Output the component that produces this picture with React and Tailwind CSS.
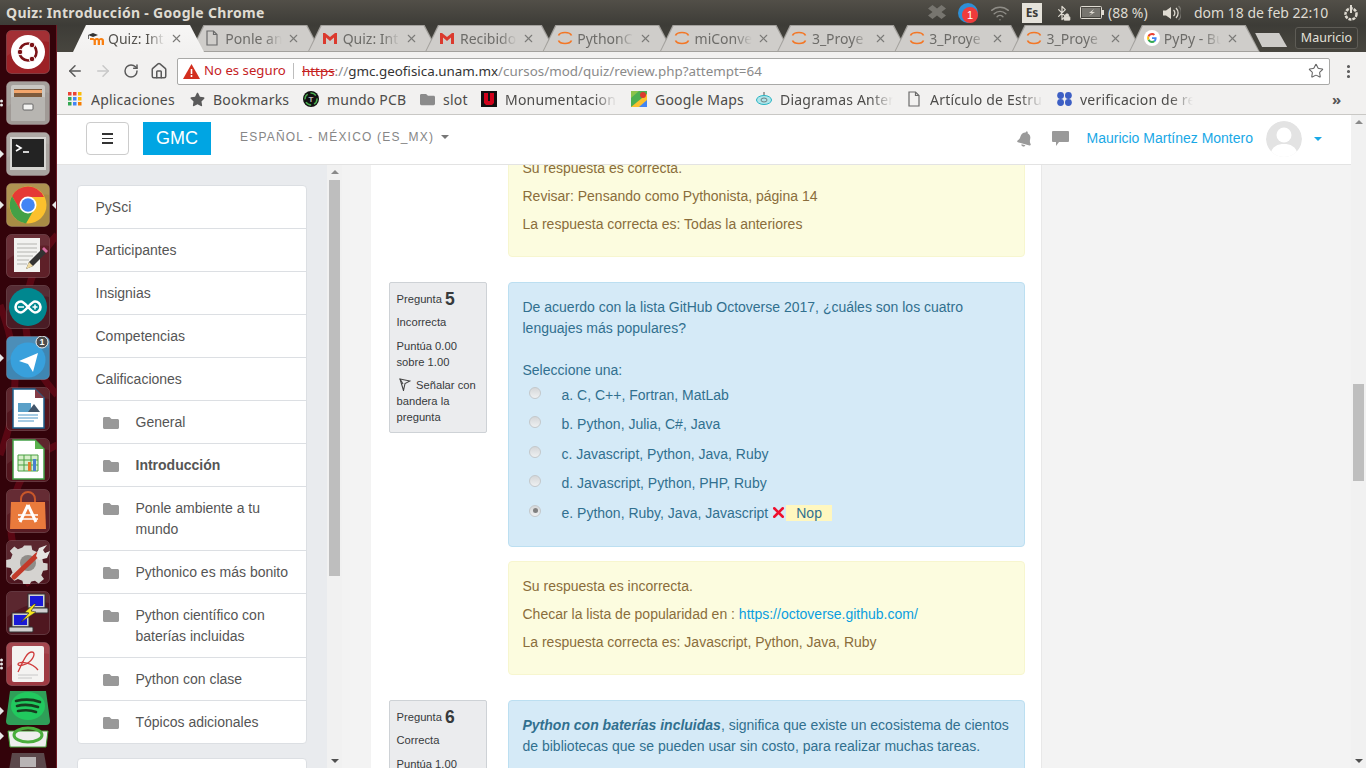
import { ArrowLeft, ArrowRight, RotateCw, Home, Star, MoreVertical, X, Wifi, Bluetooth, Lock } from 'lucide-react'
import { FaBell, FaFolder, FaStar } from 'react-icons/fa'

const tabs = [
  { label: 'Quiz: Int', icon: 'moodle', active: true },
  { label: 'Ponle an', icon: 'doc' },
  { label: 'Quiz: Int', icon: 'gmail' },
  { label: 'Recibido', icon: 'gmail' },
  { label: 'PythonC', icon: 'jupyter' },
  { label: 'miConve', icon: 'jupyter' },
  { label: '3_Proye', icon: 'jupyter' },
  { label: '3_Proye', icon: 'jupyter' },
  { label: '3_Proye', icon: 'jupyter' },
  { label: 'PyPy - Bu', icon: 'google' },
]

const sideItems = [
  { label: 'PySci' },
  { label: 'Participantes' },
  { label: 'Insignias' },
  { label: 'Competencias' },
  { label: 'Calificaciones' },
  { label: 'General', folder: true },
  { label: 'Introducción', folder: true, bold: true },
  { label: 'Ponle ambiente a tu mundo', folder: true },
  { label: 'Pythonico es más bonito', folder: true },
  { label: 'Python científico con baterías incluidas', folder: true },
  { label: 'Python con clase', folder: true },
  { label: 'Tópicos adicionales', folder: true },
]

const options = [
  'a. C, C++, Fortran, MatLab',
  'b. Python, Julia, C#, Java',
  'c. Javascript, Python, Java, Ruby',
  'd. Javascript, Python, PHP, Ruby',
]

function DocIcon({ className = '' }) {
  return (
    <svg width="14" height="16" viewBox="0 0 14 16" className={className} fill="none" stroke="#6b6b6b" strokeWidth="1.2">
      <path d="M2 1h6.5L12 4.5V15H2z" />
      <path d="M8.5 1v3.5H12" />
    </svg>
  )
}

function Favicon({ type }) {
  if (type === 'doc') return <DocIcon className="-ml-[2px]" />
  if (type === 'gmail') return (
    <svg width="16" height="13" viewBox="0 0 16 13" className="-ml-[2px]">
      <path d="M1 1h2l5 4 5-4h2v11h-3V5.5L8 9 4 5.5V12H1z" fill="#db3a2e" />
    </svg>
  )
  if (type === 'jupyter') return (
    <svg width="16" height="16" viewBox="0 0 16 16" className="-ml-[1px]" fill="none" stroke="#f37726" strokeWidth="1.7">
      <path d="M1.5 5.5C3 1.5 13 1.5 14.5 5.5" />
      <path d="M1.5 10.5C3 14.5 13 14.5 14.5 10.5" />
    </svg>
  )
  if (type === 'google') return (
    <svg width="16" height="16" viewBox="0 0 16 16">
      <circle cx="8" cy="8" r="8" fill="#fff" />
      <path d="M12.6 8.2c0-.4 0-.7-.1-1H8v1.9h2.6c-.1.6-.5 1.1-1 1.500l1.500 1.200c.9-.8 1.500-2.100 1.500-3.600z" fill="#4285f4" />
      <path d="M8 13c1.300 0 2.300-.4 3.100-1.200l-1.500-1.200c-.4.3-1 .5-1.600.5-1.200 0-2.300-.8-2.700-2L3.700 10.300C4.500 11.900 6.100 13 8 13z" fill="#34a853" />
      <path d="M5.300 9.100c-.2-.7-.2-1.500 0-2.200L3.700 5.700c-.7 1.400-.7 3.200 0 4.600z" fill="#fbbc05" />
      <path d="M8 4.900c.7 0 1.300.2 1.800.7l1.300-1.300C10.300 3.500 9.200 3 8 3 6.100 3 4.500 4.100 3.700 5.700l1.600 1.200C5.700 5.700 6.800 4.900 8 4.900z" fill="#ea4335" />
    </svg>
  )
  return (
    <svg width="18" height="14" viewBox="0 0 18 14" className="-ml-[1px]">
      <path d="M3 8V6h2.500c1 0 1.500.5 2 1 .6-.7 1.300-1 2.300-1 1.200 0 1.700.4 2.200 1 .5-.6 1.200-1 2.200-1 1.800 0 2.800 1 2.800 2.700V13h-2.300V9c0-.8-.3-1.100-.9-1.100S13 8.200 13 9v4h-2.300V9c0-.8-.3-1.100-.9-1.100s-.9.300-.9 1.100v4H6.600V9c0-.6-.2-1-.8-1z" fill="#f98012" />
      <path d="M1 3l5-2 5 2-5 2z" fill="#333" />
      <path d="M1.500 3v4" stroke="#333" strokeWidth=".7" />
    </svg>
  )
}

function Tab({ label, icon, active }) {
  return (
    <div className={`shrink-0 w-[131px] h-[27px] -mr-[13.7px] [clip-path:polygon(0_100%,13px_0,117px_0,131px_100%)] ${active ? 'relative z-10 bg-[#f4f3f2]' : 'bg-[#a3a19d] pb-px'}`}>
      <div className={`h-full flex items-center pl-[14px] [clip-path:polygon(1.5px_100%,14px_1px,116px_1px,129.500px_100%)] ${active ? 'bg-linear-to-b from-[#f7f6f5] to-[#f2f1f0]' : 'bg-[#cfcdca]'}`}>
        <span className="w-[18px] flex justify-center shrink-0"><Favicon type={icon} /></span>
        <span className={`ml-[3px] w-[57px] shrink-0 overflow-hidden whitespace-nowrap text-[14px] [mask-image:linear-gradient(to_right,black_70%,transparent)] ${active ? 'text-[#55534f]' : 'text-[#6d6c69]'}`}>{label}</span>
        <X size={13} strokeWidth={2} className="ml-[5px] text-[#7b7a78]" />
      </div>
    </div>
  )
}

function Tile({ children, fill = '#5c1a22' }) {
  return (
    <svg width="44" height="44" viewBox="0 0 44 44" className="block shrink-0">
      <rect x=".5" y=".5" width="43" height="43" rx="5" fill={fill} stroke="#ffffff" strokeOpacity=".18" />
      <path d="M1 6a5 5 0 0 1 5-5h32a5 5 0 0 1 5 5v6C30 10 14 16 1 26z" fill="#fff" opacity=".07" />
      {children}
    </svg>
  )
}

function Pip() {
  return <span className="w-0 h-0 border-y-[4px] border-y-transparent border-l-[4px] border-l-[#e8e8e8]" />
}

function Dot() {
  return <span className="w-[3px] h-[3px] rounded-full bg-[#e8e8e8]" />
}

const launcherIcons = [
  {
    icon: (
      <Tile fill="#9c2126" key="ubuntu">
        <circle cx="22" cy="22" r="17" fill="#fff" />
        <circle cx="22" cy="22" r="8.500" fill="none" stroke="#7b1216" strokeWidth="2.600" />
        <circle cx="14" cy="22" r="2.800" fill="#7b1216" stroke="#fff" />
        <circle cx="26" cy="15" r="2.800" fill="#7b1216" stroke="#fff" />
        <circle cx="26" cy="29" r="2.800" fill="#7b1216" stroke="#fff" />
      </Tile>
    ),
  },
  {
    dots: 2,
    icon: (
      <Tile fill="#a09a96">
        <rect x="5" y="4" width="34" height="36" rx="2" fill="#c9c7c3" />
        <rect x="8" y="8" width="28" height="8" fill="#7d5a3c" />
        <rect x="8" y="9" width="28" height="3" fill="#f2a56b" />
        <rect x="5" y="16" width="34" height="24" rx="1" fill="#b7b5b1" />
        <rect x="17" y="23" width="10" height="6" rx="1" fill="#f3f3f1" stroke="#666" />
      </Tile>
    ),
  },
  {
    pip: true,
    icon: (
      <Tile fill="#a8a39f">
        <rect x="4" y="5" width="36" height="33" fill="#d6d5d2" />
        <rect x="6" y="7" width="32" height="28" fill="#232323" />
        <path d="M10 13l5 3-5 3" fill="none" stroke="#fff" strokeWidth="1.600" />
        <path d="M17 20h6" stroke="#fff" strokeWidth="1.600" />
      </Tile>
    ),
  },
  {
    pip: true,
    focused: true,
    icon: (
      <Tile fill="#a98b45">
        <circle cx="22" cy="22" r="18.500" fill="#fbc02d" />
        <path d="M22 3.500A18.500 18.500 0 0 0 6 13l8 14 8-13h16A18.500 18.500 0 0 0 22 3.500z" fill="#e53935" />
        <path d="M6 13a18.500 18.500 0 0 0 14 27.400l8-13.900H14z" fill="#43a047" />
        <circle cx="22" cy="22" r="8.500" fill="#fff" />
        <circle cx="22" cy="22" r="6.800" fill="#4285f4" />
      </Tile>
    ),
  },
  {
    icon: (
      <Tile fill="#5e2028">
        <rect x="8" y="4" width="26" height="34" fill="#f2f2f0" />
        <path d="M11 10h20M11 14h20M11 18h20M11 22h16M11 26h12M11 30h10" stroke="#b4b4b0" />
        <path d="M20 35l3-7 13-13 4 4-13 13z" fill="#333" />
        <path d="M20 35l3-7 4 4z" fill="#eed9a0" />
        <path d="M36 15l2-2 4 4-2 2z" fill="#d66ba0" />
      </Tile>
    ),
  },
  {
    icon: (
      <Tile fill="#4a1c25">
        <circle cx="22" cy="22" r="19" fill="#00878f" />
        <path d="M15 16.500a5.500 5.500 0 1 0 0 11c4 0 10-11 14-11a5.500 5.500 0 1 1 0 11c-4 0-10-11-14-11z" fill="none" stroke="#fff" strokeWidth="2.600" />
        <path d="M12 22h6M26.500 22h5M29 19.500v5" stroke="#fff" strokeWidth="1.500" />
      </Tile>
    ),
  },
  {
    pip: true,
    icon: (
      <Tile fill="#3f86b3">
        <circle cx="22" cy="24" r="17.500" fill="#38a0dc" />
        <path d="M13 25l19-8-5 19-5-8z" fill="#fff" />
        <circle cx="36" cy="6" r="6" fill="#4d4d4d" stroke="#f0f0f0" />
        <text x="36" y="9" textAnchor="middle" fontSize="9" fontWeight="700" fill="#fff" fontFamily="Liberation Sans">1</text>
      </Tile>
    ),
  },
  {
    icon: (
      <Tile fill="#52161e">
        <path d="M7 2h22l9 9v30H7z" fill="#fff" stroke="#1d5f8c" strokeWidth="1.500" />
        <path d="M29 2v9h9z" fill="#843c47" />
        <rect x="12" y="16" width="13" height="9" fill="#5aa0c8" />
        <path d="M22 25l6-8 6 8z" fill="#41556a" />
        <path d="M12 28h20M12 31h20M12 34h16" stroke="#4d97c8" />
      </Tile>
    ),
  },
  {
    icon: (
      <Tile fill="#52161e">
        <path d="M7 2h22l9 9v30H7z" fill="#fff" stroke="#43a047" strokeWidth="1.500" />
        <path d="M29 2v9h9z" fill="#5ab04c" />
        <path d="M12 17h20v16H12z" fill="#d8eeca" stroke="#4aa142" />
        <path d="M12 22h20M12 27h20M18 17v16M25 17v16" stroke="#4aa142" />
        <rect x="22" y="24" width="3" height="9" fill="#e57a2b" />
        <rect x="27" y="21" width="3" height="12" fill="#4a7fd0" />
      </Tile>
    ),
  },
  {
    icon: (
      <Tile fill="#5a1d25">
        <path d="M5 13h34l1 27H4z" fill="#e97a3c" />
        <path d="M15 13v-3a7 7 0 0 1 14 0v3" fill="none" stroke="#c9572a" strokeWidth="2" />
        <path d="M22 16l-8 17M22 16l8 17" stroke="#fff" strokeWidth="3" />
        <path d="M12 26h20M12 30h20" stroke="#fff" strokeWidth="1.600" />
      </Tile>
    ),
  },
  {
    icon: (
      <Tile fill="#4f1720">
        <path d="M18 4h8l1 5 5 2 4-3 5 6-3 4 1 5 5 1v7l-5 1-2 5 3 4-6 5-4-3-4 1-2 3h-7l-1-4-5-2-4 2-5-5 3-4-2-5-5-1v-8l5-1 2-5-3-4 5-5 4 3 5-2z" fill="#d5d3d0" transform="translate(2 2) scale(.9)" />
        <circle cx="22" cy="23" r="8" fill="#8f8c88" />
        <path d="M8 37L31 15" stroke="#c23a2a" strokeWidth="5" strokeLinecap="round" />
        <path d="M30 16l3-8 8-3-4 5 2 3 5-2-3 7-8 2z" fill="#e6e5e3" />
      </Tile>
    ),
  },
  {
    icon: (
      <Tile fill="#4f1720">
        <rect x="22" y="3" width="17" height="14" fill="#d0d0d0" stroke="#333" />
        <rect x="24" y="5" width="13" height="10" fill="#1a1ad6" />
        <rect x="25" y="17" width="17" height="5" rx="1" fill="#d0d0d0" stroke="#333" />
        <rect x="6" y="22" width="17" height="14" fill="#d0d0d0" stroke="#333" />
        <rect x="8" y="24" width="13" height="10" fill="#1a1ad6" />
        <rect x="3" y="36" width="24" height="5" rx="1" fill="#d0d0d0" stroke="#333" />
        <path d="M28 13l-9 8 4 1-8 9 15-10-5-1 5-7z" fill="#f7e61c" stroke="#333" strokeWidth=".6" />
      </Tile>
    ),
  },
  {
    dots: 3,
    icon: (
      <Tile fill="#9e3a42">
        <rect x="6" y="4" width="32" height="36" rx="2" fill="#f4f3f1" />
        <path d="M12 30c4-8 8-20 14-20 4 0 2 8-6 12-5 2-8 2-8 0 0-3 14-2 20 6" fill="none" stroke="#cf3a3a" strokeWidth="1.300" />
        <path d="M12 33h20M12 36h14" stroke="#c8c8c8" />
      </Tile>
    ),
  },
]

function Launcher() {
  return (
    <aside className="relative w-[57px] shrink-0 bg-[#33030a] flex flex-col items-center gap-[7px] pt-[5px] pr-[1px] overflow-hidden border-r border-[#6d1a25]">
      {/* wallpaper swirl behind the icons */}
      <svg width="57" height="743" viewBox="0 0 57 743" className="absolute inset-0" fill="none" stroke="#7a0c1c" strokeWidth="7" opacity=".55">
        <path d="M57 210C20 250 10 320 57 370" />
        <path d="M57 420C10 440 -5 510 30 560" />
        <path d="M0 280C20 330 20 380 0 430" />
      </svg>
      {launcherIcons.map((item, i) => (
        <div key={i} className="relative">
          {item.icon}
          {item.pip && <span className="absolute -left-[6px] top-1/2 -translate-y-1/2 flex"><Pip /></span>}
          {item.dots && (
            <span className="absolute -left-[6px] top-1/2 -translate-y-1/2 flex flex-col gap-[1px]">
              {Array.from({ length: item.dots }).map((_, d) => <Dot key={d} />)}
            </span>
          )}
          {item.focused && <span className="absolute -right-[6px] top-1/2 -translate-y-1/2 w-0 h-0 border-y-[4px] border-y-transparent border-r-[4px] border-r-[#e8e8e8]" />}
        </div>
      ))}
      <div className="relative -mt-[2px]">
        <svg width="48" height="80" viewBox="0 0 48 80" className="block shrink-0">
          <path d="M4 40h40l-2 16H6z" fill="#eee" stroke="#3f9b34" />
          <ellipse cx="24" cy="44" rx="14" ry="7" fill="none" stroke="#4aae3d" strokeWidth="3" />
          <path d="M8 62h32l3 17H5z" fill="#777" opacity=".6" />
          <path d="M16 66h16v10H16z" fill="#cfcfcf" opacity=".8" />
          <path d="M6 0h36l4 30a4 4 0 0 1-4 4H6a4 4 0 0 1-4-4z" fill="#2f9f58" />
          <ellipse cx="24" cy="15" rx="17" ry="14" fill="#1ed760" opacity=".75" />
          <path d="M12 10c8-2 16-2 24 1M13 15c7-2 15-1 21 1M14 20c6-1 13-1 18 1" stroke="#173d1f" strokeWidth="2.600" fill="none" strokeLinecap="round" />
        </svg>
        <span className="absolute -left-[4px] top-[16px] flex"><Pip /></span>
        <span className="absolute -left-[4px] top-[41px] flex"><Pip /></span>
      </div>
    </aside>
  )
}

function TopBar() {
  return (
    <header className="h-[25px] shrink-0 flex items-center bg-linear-to-b from-[#524f48] to-[#3d3c37] text-[#dfdbd2] font-['Noto_Sans',sans-serif]">
      <span className="ml-[6px] font-bold text-[14px] tracking-[.32px]">Quiz: Introducción - Google Chrome</span>
      <div className="ml-auto flex items-center text-[14px] pr-[6px]">
        <svg width="18" height="15" viewBox="0 0 18 15" fill="#77756f"><path d="M4.500 0L9 3.500 13.500 0 18 3.500 13.500 7 18 10.500 13.500 14 9 10.500 4.500 14 0 10.500 4.500 7 0 3.500z" /></svg>
        <svg width="21" height="20" viewBox="0 0 21 20" className="ml-[12px]">
          <circle cx="10" cy="10" r="10" fill="#2d8fd6" />
          <circle cx="12" cy="12" r="8" fill="#ee3b3b" />
          <text x="12" y="16" textAnchor="middle" fontSize="11" fill="#fff" fontFamily="Liberation Sans">1</text>
        </svg>
        <Wifi size={20} strokeWidth={1.700} className="ml-[11px] text-[#8f8d87]" />
        <span className="ml-[12px] w-[20px] h-[20px] bg-[#e5e2da] text-[#3c3b37] text-[12px] font-bold flex items-center justify-center">Es</span>
        <span className="relative ml-[12px] w-[15px]">
          <Bluetooth size={16} strokeWidth={1.800} className="text-[#dfdbd2]" />
          <Lock size={8} className="absolute right-[-2px] bottom-0 text-[#dfdbd2]" fill="#dfdbd2" />
        </span>
        <svg width="24" height="13" viewBox="0 0 24 13" className="ml-[11px]" fill="none">
          <rect x=".5" y=".5" width="21" height="12" rx="1" stroke="#dfdbd2" />
          <rect x="2" y="2" width="18" height="9" fill="#77756f" />
          <rect x="22" y="4" width="2" height="5" fill="#dfdbd2" />
          <path d="M14 3L9 7h3l-3 3 6-4h-3z" fill="#dfdbd2" />
        </svg>
        <span className="ml-[4px] w-[41px] whitespace-nowrap">(88 %)</span>
        <svg width="19" height="16" viewBox="0 0 19 16" className="ml-[13px]" fill="none">
          <path d="M1 5.500h3L9 2v12l-5-3.500H1z" fill="#dfdbd2" />
          <path d="M11.500 5a4 4 0 0 1 0 6" stroke="#dfdbd2" strokeWidth="1.300" />
          <path d="M14 3a7 7 0 0 1 0 10" stroke="#dfdbd2" strokeWidth="1.300" />
          <path d="M16.500 1a10 10 0 0 1 0 14" stroke="#77756f" strokeWidth="1.300" />
        </svg>
        <span className="ml-[13px] w-[135px] whitespace-nowrap">dom 18 de feb 22:10</span>
        <svg width="18" height="18" viewBox="0 0 18 18" className="ml-[13px]" fill="none">
          <circle cx="9" cy="10" r="5.500" stroke="#dfdbd2" strokeWidth="2.500" strokeDasharray="3 1" />
          <path d="M9 1v8" stroke="#dfdbd2" strokeWidth="2" />
        </svg>
      </div>
    </header>
  )
}

function TabStrip() {
  return (
    <div className="h-[27px] shrink-0 flex pl-[16px] bg-linear-to-b from-[#3d3c37] to-[#48463f]">
      {tabs.map((t, i) => <Tab key={i} {...t} />)}
      <div className="ml-[9px] mt-[8px] w-[32px] h-[14px] bg-[#cdcbc8] shrink-0 [clip-path:polygon(0_0,24px_0,100%_100%,7px_100%)]" />
      <div className="ml-auto mr-[8px] mt-[2px] w-[63px] h-[22px] rounded-[3px] border border-[#5e5c56] bg-[#3d3c37] text-[#e4e1da] text-[12.500px] flex items-center justify-center">Mauricio</div>
    </div>
  )
}

function Toolbar() {
  return (
    <div className="h-[34px] shrink-0 flex items-center bg-[#f2f1f0] pl-[4px] pt-[4px]">
      <span className="w-[28px] flex justify-center"><ArrowLeft size={18} strokeWidth={2} className="text-[#5a5a5a]" /></span>
      <span className="w-[28px] flex justify-center"><ArrowRight size={18} strokeWidth={2} className="text-[#c8c8c8]" /></span>
      <span className="w-[28px] flex justify-center"><RotateCw size={16} strokeWidth={2.200} className="text-[#5a5a5a]" /></span>
      <span className="w-[28px] flex justify-center"><Home size={18} strokeWidth={2} className="text-[#5a5a5a]" /></span>
      <div className="ml-[4px] w-[1153px] h-[27px] bg-white border border-[#a9a9a7] rounded-[2px] flex items-center pl-[5px] text-[13.400px] whitespace-nowrap">
        <svg width="17" height="15" viewBox="0 0 17 15">
          <path d="M8.500 0L17 15H0z" fill="#d32f1f" />
          <path d="M8.500 5v5M8.500 11v2" stroke="#fff" strokeWidth="1.600" />
        </svg>
        <span className="ml-[4px] w-[80px] text-[13.200px] text-[#c5221f]">No es seguro</span>
        <span className="ml-[9px] w-px h-[16px] bg-[#bdbdbd]" />
        <span className="ml-[8px] text-[#c5221f] line-through">https</span>
        <span className="text-[#8a8a8a]">://</span>
        <span className="text-[#333]">gmc.geofisica.unam.mx</span>
        <span className="text-[#8a8a8a]">/cursos/mod/quiz/review.php?attempt=64</span>
        <Star size={16} strokeWidth={1.600} className="ml-auto mr-[5px] text-[#666]" />
      </div>
      <MoreVertical size={17} strokeWidth={2.400} className="ml-[10px] text-[#5a5a5a]" />
    </div>
  )
}

function Bookmark({ icon, label, width, gap, fade }) {
  return (
    <div className="flex items-center shrink-0" style={{ marginRight: gap }}>
      <span className="w-[16px] flex justify-center shrink-0">{icon}</span>
      <span
        className={`ml-[8px] overflow-hidden whitespace-nowrap ${fade ? '[mask-image:linear-gradient(to_right,black_80%,transparent)]' : ''}`}
        style={{ width }}
      >{label}</span>
    </div>
  )
}

function BookmarksBar() {
  const apps = (
    <svg width="14" height="14" viewBox="0 0 14 14">
      {[['#ea4335', 0, 0], ['#ea4335', 5, 0], ['#fbbc05', 10, 0], ['#34a853', 0, 5], ['#4285f4', 5, 5], ['#fbbc05', 10, 5], ['#34a853', 0, 10], ['#4285f4', 5, 10], ['#f57c00', 10, 10]].map(([c, x, y], i) => (
        <rect key={i} x={x} y={y} width="3.500" height="3.500" fill={c} />
      ))}
    </svg>
  )
  const pcb = (
    <svg width="16" height="16" viewBox="0 0 16 16">
      <circle cx="8" cy="8" r="8" fill="#111" />
      <circle cx="8" cy="8" r="6" fill="none" stroke="#4caf50" strokeWidth="1.500" strokeDasharray="6 3" />
      <text x="8" y="11" textAnchor="middle" fontSize="8" fontWeight="700" fill="#bbb" fontFamily="Liberation Sans">T</text>
    </svg>
  )
  const unam = (
    <svg width="16" height="16" viewBox="0 0 16 16">
      <rect width="16" height="16" fill="#111" />
      <path d="M3 2h4v8h2V2h4v10l-2 2H5l-2-2z" fill="#d0021b" />
    </svg>
  )
  const maps = (
    <svg width="16" height="16" viewBox="0 0 16 16">
      <rect width="16" height="16" fill="#4caf50" />
      <path d="M0 16L16 3v13z" fill="#fbc02d" />
      <path d="M8 16l8-7v7z" fill="#4285f4" />
      <path d="M0 0h8L0 7z" fill="#8bc34a" />
      <circle cx="12" cy="4" r="3" fill="#db3a2e" />
    </svg>
  )
  const diagram = (
    <svg width="16" height="16" viewBox="0 0 16 16" fill="none">
      <ellipse cx="8" cy="9" rx="7.500" ry="4.500" fill="#aee5ea" stroke="#27b3c2" />
      <ellipse cx="8" cy="9" rx="3" ry="2" stroke="#555" strokeWidth=".7" />
      <path d="M8 4V1" stroke="#555" />
    </svg>
  )
  const verify = (
    <svg width="15" height="14" viewBox="0 0 15 14" fill="#3d5fc4">
      <circle cx="3.600" cy="3.500" r="3.400" />
      <circle cx="11.400" cy="3.500" r="3.400" />
      <circle cx="3.600" cy="10.500" r="3.400" />
      <circle cx="11.400" cy="10.500" r="3.400" />
    </svg>
  )
  return (
    <div className="h-[29px] shrink-0 flex items-center bg-[#f2f1f0] border-b border-[#c9c8c5] pl-[10px] pb-[2px] text-[14px] tracking-[.2px] text-[#4d4c4a]">
      <Bookmark icon={apps} label="Aplicaciones" width={86} gap={12} />
      <Bookmark icon={<FaStar size={15} className="text-[#5a5a5a]" />} label="Bookmarks" width={78} gap={12} />
      <Bookmark icon={pcb} label="mundo PCB" width={79} gap={13} />
      <Bookmark icon={<FaFolder size={15} className="text-[#8b8b8b]" />} label="slot" width={26} gap={12} />
      <Bookmark icon={unam} label="Monumentacion" width={112} gap={14} fade />
      <Bookmark icon={maps} label="Google Maps" width={89} gap={12} />
      <Bookmark icon={diagram} label="Diagramas Anter" width={113} gap={13} fade />
      <Bookmark icon={<DocIcon />} label="Artículo de Estru" width={113} gap={13} fade />
      <Bookmark icon={verify} label="verificacion de re" width={113} gap={0} fade />
      <span className="ml-[139px] text-[15px] font-bold text-[#555] leading-none">»</span>
    </div>
  )
}

function NavBar() {
  return (
    <div className="h-[50px] shrink-0 bg-white border-b border-[#e3e3e3] flex items-start pt-[7px] pl-[29px]">
      <button className="w-[43px] h-[33px] border border-[#ccc] rounded-[4px] flex flex-col items-center justify-center gap-[3px]">
        <span className="w-[11px] h-[1.500px] bg-[#333]" />
        <span className="w-[11px] h-[1.500px] bg-[#333]" />
        <span className="w-[11px] h-[1.500px] bg-[#333]" />
      </button>
      <div className="ml-[14px] w-[68px] h-[33px] bg-[#00a5e3] text-white text-[18px] flex items-center justify-center">GMC</div>
      <span className="ml-[29px] h-[29px] flex items-center text-[12px] tracking-[1.2px] text-[#868686]">ESPAÑOL - MÉXICO (ES_MX)</span>
      <span className="ml-[7px] mt-[13px] w-0 h-0 border-x-[4px] border-x-transparent border-t-[4px] border-t-[#777]" />
      <div className="ml-auto flex items-center h-[33px]">
        <FaBell size={16} className="rotate-[15deg] text-[#9a9a9a]" />
        <svg width="17" height="15" viewBox="0 0 17 15" className="ml-[19px]" fill="#9a9a9a">
          <path d="M1 0h15a1 1 0 0 1 1 1v9a1 1 0 0 1-1 1H7l-3 4v-4H1a1 1 0 0 1-1-1V1a1 1 0 0 1 1-1z" />
        </svg>
        <span className="ml-[17px] text-[14px] text-[#19a8e6] whitespace-nowrap">Mauricio Martínez Montero</span>
        <svg width="36" height="36" viewBox="0 0 36 36" className="ml-[13px] rounded-full">
          <circle cx="18" cy="18" r="18" fill="#e3e3e3" />
          <circle cx="18" cy="14" r="7.500" fill="#fff" />
          <path d="M4 34c2-9 8-11 14-11s12 2 14 11a18 18 0 0 1-28 0z" fill="#fff" />
        </svg>
        <span className="ml-[12px] mr-[29px] w-0 h-0 border-x-[4px] border-x-transparent border-t-[4px] border-t-[#19a8e6]" />
      </div>
    </div>
  )
}

function Sidebar() {
  return (
    <div className="w-[270px] shrink-0 bg-[#e9ebee] pl-[20px] pt-[20px] overflow-hidden">
      <ul className="w-[230px] bg-white border border-[#dcdfe3] rounded-[4px] text-[14px] leading-[21px] text-[#555]">
        {sideItems.map((item, i) => (
          <li key={item.label} className={`flex pr-[12px] pt-[11px] pb-[10px] ${i ? 'border-t border-[#dcdfe3]' : ''} ${item.folder ? 'pl-[25px]' : 'pl-[17.500px]'} ${item.bold ? 'font-bold' : ''}`}>
            {item.folder && <FaFolder size={16} className="shrink-0 mr-[16.500px] mt-[3px] text-[#999]" />}
            <span className={item.label.startsWith('Ponle') ? 'w-[130px]' : ''}>{item.label}</span>
          </li>
        ))}
      </ul>
      <div className="w-[230px] h-[40px] mt-[14px] bg-white border border-[#dcdfe3] rounded-[4px]" />
    </div>
  )
}

function ScrollBar({ thumbTop, thumbHeight, className = '' }) {
  return (
    <div className={`relative shrink-0 bg-[#f1f1f1] ${className}`}>
      <span className="absolute top-[5px] left-1/2 -translate-x-1/2 w-0 h-0 border-x-[4px] border-x-transparent border-b-[4px] border-b-[#8a8a8a]" />
      <div className="absolute left-[2px] right-[2px] bg-[#bebebe]" style={{ top: thumbTop, height: thumbHeight }} />
      <span className="absolute bottom-[5px] left-1/2 -translate-x-1/2 w-0 h-0 border-x-[4px] border-x-transparent border-t-[4px] border-t-[#505050]" />
    </div>
  )
}

function Radio({ checked }) {
  return (
    <span className="w-[12px] h-[12px] rounded-full border border-[#c4c8cb] bg-linear-to-b from-[#d5d7d9] to-[#eef0f1] flex items-center justify-center shrink-0 mt-[2px]">
      {checked && <span className="w-[5px] h-[5px] rounded-full bg-[#808080]" />}
    </span>
  )
}

function Info({ number, state, score, max }) {
  return (
    <div className="w-[98px] shrink-0 self-start bg-[#ebecee] border border-[#ced2d6] rounded-[2px] pl-[6.500px] pr-[7px] pt-[7px] pb-[7px] text-[11.200px] leading-[16px] text-[#373a3c]">
      <div className="h-[18px] flex items-center gap-[3px]">Pregunta <span className="text-[17.500px] font-bold">{number}</span></div>
      <div className="mt-[6px]">{state}</div>
      <div className="mt-[8px]">Puntúa {score} sobre {max}</div>
      <div className="mt-[7px]">
        <svg width="12" height="13" viewBox="0 0 12 13" className="inline ml-[2.500px] mr-[5px] align-[-2px]" fill="none" stroke="#444" strokeWidth="1.100">
          <path d="M1 1l10 2-5 2.500-1.500 7z" />
          <path d="M1 1l3 5" />
        </svg>
        Señalar con bandera la pregunta
      </div>
    </div>
  )
}

function Feedback({ children, className = '' }) {
  return (
    <div className={`w-[517px] bg-[#fcfcdf] border border-[#f7f6cf] rounded-[4px] pl-[13.500px] pr-[14px] pt-[14px] pb-[21px] text-[#8a6d3b] text-[14px] leading-[21px] flex flex-col gap-[7px] ${className}`}>
      {children}
    </div>
  )
}

function Main() {
  return (
    <main className="w-[671px] shrink-0 bg-white border-r border-[#e8e8e8] pl-[18px] overflow-hidden">
      {/* the page is scrolled: the top of question 4 feedback is above the fold */}
      <Feedback className="-mt-[22px] ml-[119px]">
        <p>Su respuesta es correcta.</p>
        <p>Revisar: Pensando como Pythonista, página 14</p>
        <p>La respuesta correcta es: Todas la anteriores</p>
      </Feedback>

      <section className="flex gap-[21px] mt-[25px]">
        <Info number="5" state="Incorrecta" score="0.00" max="1.00" />
        <div>
          <div className="w-[517px] h-[265px] bg-[#d5eaf7] border border-[#bcdff1] rounded-[4px] pl-[13.500px] pr-[14px] pt-[14px] text-[#31708f] text-[14px] leading-[21px]">
            <p>De acuerdo con la lista GitHub Octoverse 2017, ¿cuáles son los cuatro lenguajes más populares?</p>
            <p className="mt-[21px]">Seleccione una:</p>
            <div className="mt-[3.500px] flex flex-col gap-[8.500px]">
              {options.map(o => (
                <div key={o} className="flex items-start pl-[6.500px]">
                  <Radio />
                  <span className="ml-[20.500px]">{o}</span>
                </div>
              ))}
              <div className="flex items-start pl-[6.500px]">
                <Radio checked />
                <span className="ml-[20.500px]">e. Python, Ruby, Java, Javascript</span>
                <X size={17} strokeWidth={3.500} className="ml-[2px] mt-[1px] text-[#ee0f2d]" />
                <span className="-ml-[1px] h-[16px] px-[10px] mt-[2px] leading-[16px] bg-[#fff7bf]">Nop</span>
              </div>
            </div>
          </div>
          <Feedback className="mt-[14px]">
            <p>Su respuesta es incorrecta.</p>
            <p>Checar la lista de popularidad en : <a className="text-[#0a9ee0]">https://octoverse.github.com/</a></p>
            <p>La respuesta correcta es: Javascript, Python, Java, Ruby</p>
          </Feedback>
        </div>
      </section>

      <section className="flex gap-[21px] mt-[25px]">
        <Info number="6" state="Correcta" score="1.00" max="1.00" />
        <div className="w-[517px] h-[200px] bg-[#d5eaf7] border border-[#bcdff1] rounded-[4px] pl-[13.500px] pr-[14px] pt-[14px] text-[#31708f] text-[14px] leading-[21px]">
          <p><b><i>Python con baterías incluidas</i></b>, significa que existe un ecosistema de cientos de bibliotecas que se pueden usar sin costo, para realizar muchas tareas.</p>
        </div>
      </section>
    </main>
  )
}

export default function App() {
  return (
    <div className="h-screen overflow-hidden flex flex-col bg-[#f3f3f3] font-['Liberation_Sans',sans-serif]">
      <TopBar />
      <div className="flex-1 min-h-0 flex">
        <Launcher />
        <div className="flex-1 min-w-0 flex flex-col">
          <div className="shrink-0 font-['Noto_Sans',sans-serif]">
            <TabStrip />
            <Toolbar />
            <BookmarksBar />
          </div>
          <div className="flex-1 min-h-0 flex">
            <div className="w-[1294px] shrink-0 flex flex-col">
              <NavBar />
              <div className="flex-1 min-h-0 flex bg-[#f3f3f3]">
                <Sidebar />
                <ScrollBar thumbTop={15} thumbHeight={396} className="w-[15px]" />
                <div className="w-[29px] shrink-0" />
                <Main />
              </div>
            </div>
            <ScrollBar thumbTop={269} thumbHeight={97} className="w-[15px]" />
          </div>
        </div>
      </div>
    </div>
  )
}
